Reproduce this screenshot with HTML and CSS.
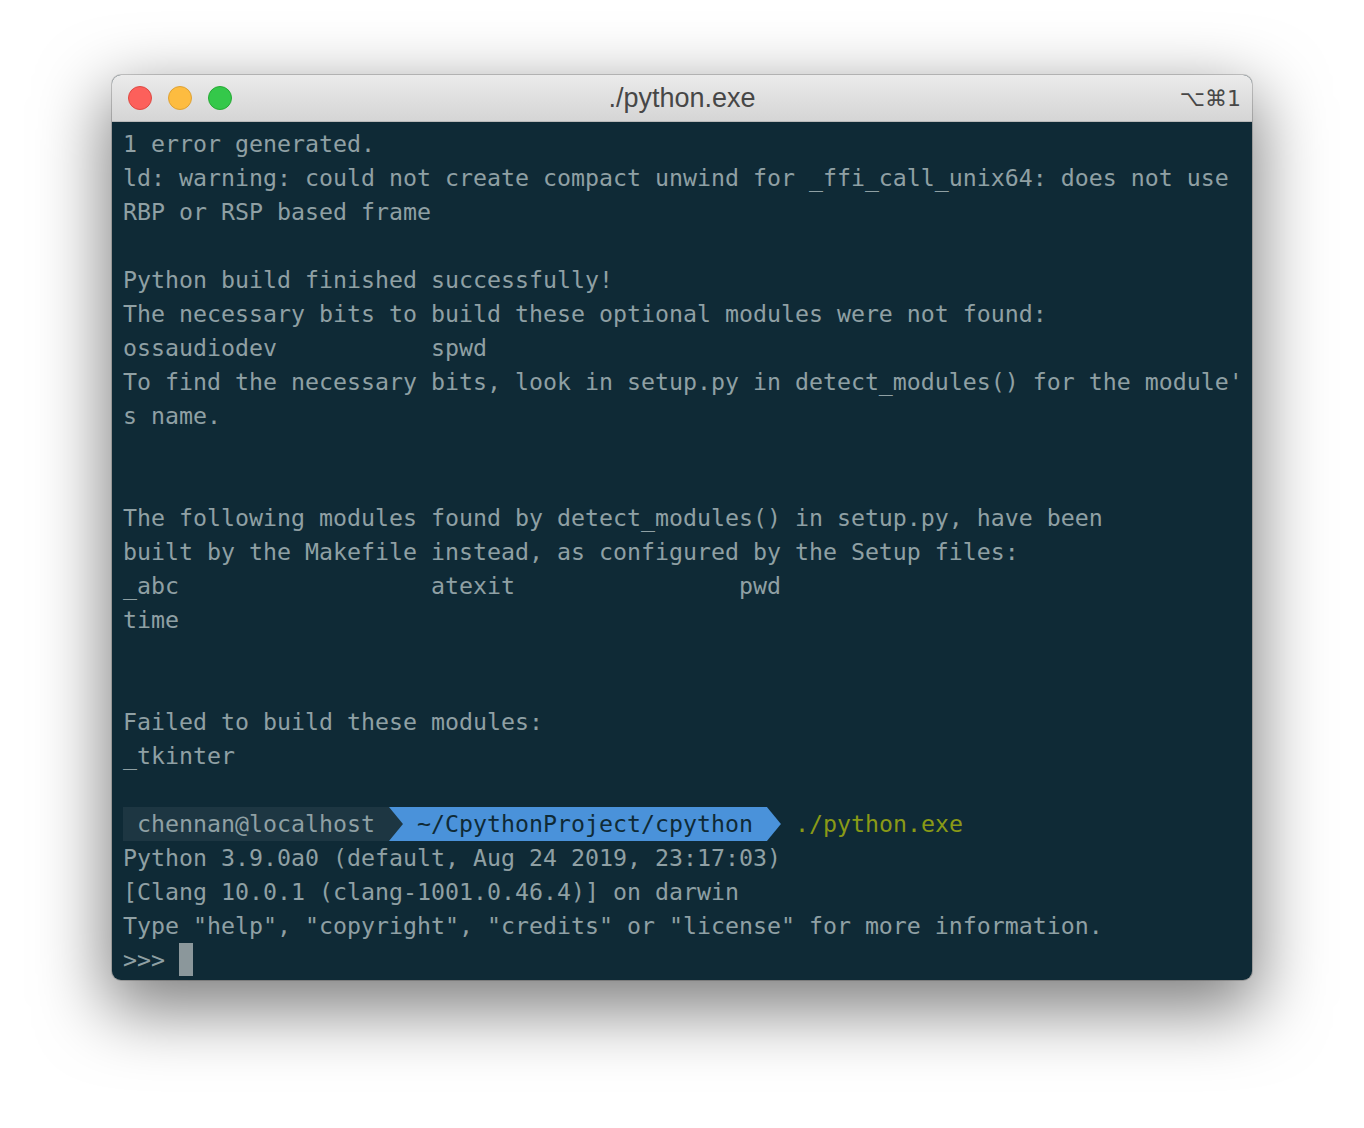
FILE: index.html
```html
<!DOCTYPE html>
<html lang="en">
<head>
    <meta charset="UTF-8">
    <title>./python.exe</title>
    <link rel="stylesheet" href="styles.css">
</head>
<body>
<div class="window">
    <div class="titlebar">
        <div class="lights">
            <span class="light light--close"></span>
            <span class="light light--min"></span>
            <span class="light light--max"></span>
        </div>
        <div class="title">./python.exe</div>
        <div class="shortcut">⌥⌘1</div>
    </div>
<pre class="screen">1 error generated.
ld: warning: could not create compact unwind for _ffi_call_unix64: does not use
RBP or RSP based frame

Python build finished successfully!
The necessary bits to build these optional modules were not found:
ossaudiodev           spwd
To find the necessary bits, look in setup.py in detect_modules() for the module'
s name.


The following modules found by detect_modules() in setup.py, have been
built by the Makefile instead, as configured by the Setup files:
_abc                  atexit                pwd
time


Failed to build these modules:
_tkinter

<span class="seg seg--host"> chennan@localhost </span><span class="sep sep--host"></span><span class="seg seg--path"> ~/CpythonProject/cpython </span><span class="sep sep--path"></span> <span class="cmd">./python.exe</span>
Python 3.9.0a0 (default, Aug 24 2019, 23:17:03)
[Clang 10.0.1 (clang-1001.0.46.4)] on darwin
Type "help", "copyright", "credits" or "license" for more information.
&gt;&gt;&gt; <span class="cursor"> </span></pre>
</div>
</body>
</html>
```
FILE: styles.css
```css
html,
body {
    margin: 0;
    background-color: #ffffff;
}

body {
    min-height: 1128px;
    padding-top: 75px;
    box-sizing: border-box;
}

.window {
    width: 1140px;
    margin: 0 auto;
    border-radius: 9px;
    overflow: hidden;
    background-color: #0f2a36;
    box-shadow: 0 0 0 1px rgba(0, 0, 0, 0.18), 0 24px 68px 6px rgba(0, 0, 0, 0.5);
}

/* 标题栏 */
.titlebar {
    position: relative;
    display: flex;
    align-items: center;
    height: 47px;
    background: linear-gradient(#ebebeb, #d5d5d5);
    border-bottom: 1px solid #b9b9b9;
    box-sizing: border-box;
}

.lights {
    display: flex;
    gap: 16px;
    padding-left: 16px;
}

.light {
    width: 24px;
    height: 24px;
    border-radius: 50%;
    box-sizing: border-box;
}

.light--close {
    background-color: #fc605b;
    border: 1px solid #de4a43;
}

.light--min {
    background-color: #fdbc40;
    border: 1px solid #dea235;
}

.light--max {
    background-color: #34c84a;
    border: 1px solid #27aa35;
}

.title {
    position: absolute;
    left: 0;
    right: 0;
    text-align: center;
    font-family: "Liberation Sans", Arial, sans-serif;
    font-size: 27px;
    color: #474747;
    pointer-events: none;
}

.shortcut {
    margin-left: auto;
    padding-right: 11px;
    font-family: "DejaVu Sans", sans-serif;
    font-size: 22px;
    color: #474747;
}

/* 终端内容 */
.screen {
    margin: 0;
    padding: 5px 0 3px 11px;
    font-family: "DejaVu Sans Mono", monospace;
    font-size: 23.25px;
    line-height: 34px;
    color: #8fa0a4;
    white-space: pre;
}

.seg {
    display: inline-block;
    height: 34px;
    vertical-align: top;
}

.seg--host {
    background-color: #1d3642;
}

.seg--path {
    background-color: #4a92da;
    color: #0f2a36;
}

.sep {
    display: inline-block;
    width: 14px;
    height: 34px;
    vertical-align: top;
}

.sep--host {
    position: relative;
    background-color: #4a92da;
}

.sep--host:after {
    content: '';
    position: absolute;
    inset: 0;
    background-color: #1d3642;
    clip-path: polygon(0 0, 100% 50%, 0 100%);
}

.sep--path {
    background-color: #4a92da;
    clip-path: polygon(0 0, 100% 50%, 0 100%);
}

.cmd {
    color: #8a9a16;
}

.cursor {
    display: inline-block;
    width: 14px;
    height: 33px;
    vertical-align: top;
    background-color: #8b979b;
}
```
